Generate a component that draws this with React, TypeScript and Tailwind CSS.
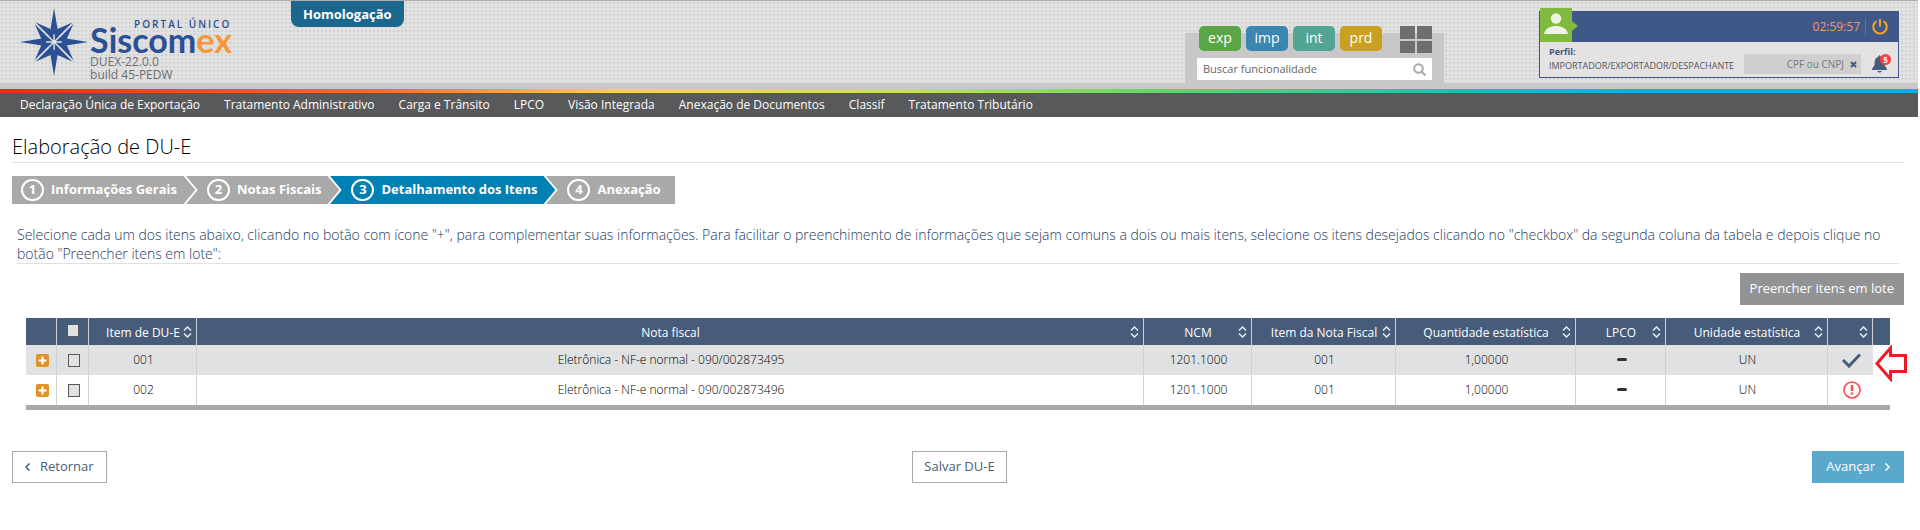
import { useState } from 'react'
import type { ReactNode } from 'react'

const menuItems = [
  'Declaração Única de Exportação',
  'Tratamento Administrativo',
  'Carga e Trânsito',
  'LPCO',
  'Visão Integrada',
  'Anexação de Documentos',
  'Classif',
  'Tratamento Tributário',
]

const modules = [
  { label: 'exp', color: 'bg-[#5aa546]' },
  { label: 'imp', color: 'bg-[#3b86b0]' },
  { label: 'int', color: 'bg-[#51a593]' },
  { label: 'prd', color: 'bg-[#c9a020]' },
]

const steps = ['Informações Gerais', 'Notas Fiscais', 'Detalhamento dos Itens', 'Anexação']

const columns = [
  { label: 'Item de DU-E', width: 'w-[108px]' },
  { label: 'Nota fiscal', width: '' },
  { label: 'NCM', width: 'w-[108px]' },
  { label: 'Item da Nota Fiscal', width: 'w-[144px]' },
  { label: 'Quantidade estatística', width: 'w-[180px]' },
  { label: 'LPCO', width: 'w-[90px]' },
  { label: 'Unidade estatística', width: 'w-[162px]' },
  { label: '', width: 'w-[45px]' },
]

const rows = [
  { item: '001', nota: 'Eletrônica - NF-e normal - 090/002873495', ncm: '1201.1000', itemNota: '001', qtd: '1,00000', unidade: 'UN', ok: true },
  { item: '002', nota: 'Eletrônica - NF-e normal - 090/002873496', ncm: '1201.1000', itemNota: '001', qtd: '1,00000', unidade: 'UN', ok: false },
]

function StarLogo() {
  return (
    <svg className="h-[70px] w-[70px]" viewBox="0 0 70 70" fill="#2b5093">
      <path d="M14 14 32 22 35 19 38 22 56 14 48 32 51 35 48 38 56 56 38 48 35 51 32 48 14 56 22 38 19 35 22 32Z" />
      <path d="M14 14 32 32M56 14 38 32M14 56 32 38M56 56 38 38" stroke="#e2e1e2" strokeWidth="1.8" />
      <path d="M35 0 40 30 70 35 40 40 35 70 30 40 0 35 30 30Z" />
      <path d="M29 29 41 41M41 29 29 41M35 27V43M27 35H43" stroke="#e2e1e2" strokeWidth="1.5" />
    </svg>
  )
}

function Logo() {
  return (
    <a href="#inicio" className="flex w-[232px] pt-1.5 pl-5" aria-label="Portal Único Siscomex">
      <StarLogo />
      <span className="pt-[11px] pl-0.5 text-[#2b5093]">
        <span className="block pl-11 text-[10px] leading-[12px] font-semibold tracking-[2px] whitespace-nowrap">PORTAL ÚNICO</span>
        <span className="-mt-0.5 block font-['Lato',sans-serif] text-[34px] leading-[24px] font-bold">
          Siscom<span className="text-[#f79838]">ex</span>
        </span>
        <span className="mt-[3px] block text-xs leading-[13px] text-[#6d6e70]">
          DUEX-22.0.0
          <br />
          build 45-PEDW
        </span>
      </span>
    </a>
  )
}

function SearchPanel() {
  return (
    <div className="mt-8 h-[50px] w-[259px] bg-[#cac7c9] px-3">
      <div className="flex justify-between pl-0.5">
        <div className="-mt-[7px] flex gap-[5px]">
          {modules.map((item) => (
            <a
              className={`h-[25px] w-[42px] rounded-[5px] text-center text-sm leading-[23px] text-white ${item.color}`}
              href={`#${item.label}`}
              key={item.label}
            >
              {item.label}
            </a>
          ))}
        </div>
        <button type="button" aria-label="Aplicações" className="-mt-[7px] grid h-[27px] w-8 grid-cols-2 gap-0.5">
          <span className="bg-[#6d6e70]" />
          <span className="bg-[#6d6e70]" />
          <span className="bg-[#6d6e70]" />
          <span className="bg-[#6d6e70]" />
        </button>
      </div>
      <div className="mt-[5px] flex h-[22px] items-center bg-white pr-1.5">
        <input
          aria-label="Buscar funcionalidade"
          className="min-w-0 flex-1 pl-1.5 text-[11px] outline-none placeholder:text-[#666]"
          placeholder="Buscar funcionalidade"
          type="text"
        />
        <button type="button" aria-label="Buscar">
          <svg className="size-[13px]" viewBox="0 0 13 13" fill="none" stroke="#a9a9a9" strokeWidth="2">
            <circle cx="5.5" cy="5.5" r="4.3" />
            <path d="m8.5 8.5 4 4" />
          </svg>
        </button>
      </div>
    </div>
  )
}

function UserPanel() {
  return (
    <div className="relative mt-2.5 mr-[19px] h-[67px] w-[360px] border border-[#405887] bg-[#e5e2e4]">
      <div className="flex h-[30px] items-center justify-end bg-[#405887] pr-2.5">
        <span className="text-xs text-[#f79855]">02:59:57</span>
        <span className="ml-[5px] h-4 w-px bg-[#5b72a3]" />
        <button type="button" aria-label="Sair" className="ml-1.5">
          <svg className="size-4" viewBox="0 0 16 16" fill="none" stroke="#f5a01f" strokeWidth="2">
            <path d="M4.5 2.2A6.7 6.7 0 1 0 11.5 2.2M8 0v7.5" />
          </svg>
        </button>
      </div>
      <svg className="absolute -top-1 left-0 h-[34px] w-[38px]" viewBox="0 0 38 34">
        <path d="M0 0H32V13L38 18 32 23V34H0Z" fill="#80bb3f" />
        <circle cx="16" cy="10.5" r="5.2" fill="#eef3e4" />
        <path d="M4 26C5 20 11 18 16 18S27 20 28 26Z" fill="#eef3e4" />
      </svg>
      <div className="flex justify-between">
        <div className="pt-[3px] pl-[9px] text-[9px] leading-[14px]">
          <p className="font-bold text-[#405887]">Perfil:</p>
          <p className="text-[#555]">IMPORTADOR/EXPORTADOR/DESPACHANTE</p>
        </div>
        <div className="flex pt-3 pr-1.5">
          <label className="flex h-5 w-[117px] items-center bg-[#d0cfd0] pr-1">
            <input
              aria-label="CPF ou CNPJ"
              className="min-w-0 flex-1 text-right text-[10px] outline-none placeholder:text-[#777]"
              placeholder="CPF ou CNPJ"
              type="text"
            />
            <svg className="ml-1.5 size-[7px]" viewBox="0 0 7 7" stroke="#405887" strokeWidth="2">
              <path d="m1 1 5 5M6 1 1 6" />
            </svg>
          </label>
          <button type="button" aria-label="Notificações" className="relative ml-[11px] size-5">
            <svg className="h-[18px] w-[15px]" viewBox="0 0 15 18" fill="#465c7a">
              <path d="M7.5 0 9 2C12 3 12.5 6 12.5 10L15 14V15H0V14L2.5 10C2.5 6 3 3 6 2ZM5 16H10Q7.5 19 5 16Z" />
            </svg>
            <span className="absolute top-0 left-2 size-[11px] rounded-full bg-[#fb3c44] text-center text-[8px] leading-[11px] font-bold text-white">
              5
            </span>
          </button>
        </div>
      </div>
    </div>
  )
}

function Stepper() {
  return (
    <ol className="mt-[13px] flex h-7 w-max bg-[#a9a9a9] text-[13px] font-bold text-white">
      {steps.map((step, index) => {
        const active = index === 2
        const beforeActive = index === 1
        return (
          <li className={active ? 'flex bg-[#0080b3]' : 'flex'} key={step}>
            <a href={`#etapa-${index + 1}`} className="flex items-center gap-[7px] pl-[9px]">
              <span className="flex h-[22px] w-[23px] items-center justify-center rounded-full border-2 border-white">{index + 1}</span>
              <span className={index === 3 ? 'pr-[14px]' : 'pr-[7px]'}>{step}</span>
            </a>
            {index < 3 ? (
              <svg className="h-7 w-[14px]" viewBox="0 0 14 28">
                <path d="M0 0H14V28H0Z" fill={beforeActive ? '#0080b3' : '#a9a9a9'} />
                <path d="M0 -1 12.5 14 0 29" fill={active ? '#0080b3' : '#a9a9a9'} stroke="#fff" strokeWidth="1.8" />
              </svg>
            ) : null}
          </li>
        )
      })}
    </ol>
  )
}

function SortIcon() {
  return (
    <svg className="h-3 w-[9px] shrink-0" viewBox="0 0 9 12" fill="none" stroke="#e6eaf0" strokeWidth="1.5">
      <path d="m1 4.5 3.5-3.5L8 4.5M1 7.5 4.5 11 8 7.5" />
    </svg>
  )
}

function Cell({ children, last }: { children: ReactNode; last?: boolean }) {
  return <td className={last ? 'pl-0.5 text-center' : 'border-r border-[#cfd0d1] pl-0.5 text-center'}>{children}</td>
}

function Checkbox({ label, checked, onChange }: { label: string; checked: boolean; onChange: () => void }) {
  return (
    <input
      aria-label={label}
      checked={checked}
      className="mx-auto block h-[13px] w-3 appearance-none border border-[#58595b] bg-[#e0e1e3] checked:bg-[#0080b3]"
      onChange={onChange}
      type="checkbox"
    />
  )
}

function ItemsTable() {
  const [selected, setSelected] = useState<string[]>([])
  const toggle = (item: string) =>
    setSelected(selected.includes(item) ? selected.filter((other) => other !== item) : [...selected, item])

  return (
    <div className="relative mx-[14px] mt-[13px]">
      <table className="w-full table-fixed border-separate border-spacing-0 border-b-[5px] border-[#a9a9a9] text-xs font-light text-black">
        <thead>
          <tr className="h-[27px] bg-[#465c7a] text-white">
            <th className="w-[31px] border-r border-[#cfd0d1]" aria-label="Editar" />
            <th className="w-8 border-r border-[#cfd0d1] pb-0.5">
              <Checkbox
                label="Selecionar todos"
                checked={selected.length === rows.length}
                onChange={() => setSelected(selected.length === rows.length ? [] : rows.map((row) => row.item))}
              />
            </th>
            {columns.map((column) => (
              <th className={`border-r border-[#cfd0d1] font-normal ${column.width}`} key={column.label}>
                <button type="button" className="flex w-full items-center pr-1" aria-label={column.label || 'Situação'}>
                  <span className="flex-1 pt-0.5 pl-[14px] whitespace-nowrap">{column.label}</span>
                  <SortIcon />
                </button>
              </th>
            ))}
            <th className="w-[17px]" aria-label="Rolagem" />
          </tr>
        </thead>
        <tbody>
          {rows.map((row) => (
            <tr className={row.ok ? 'h-[30px] bg-[#e0e1e3]' : 'h-[30px]'} key={row.item}>
              <Cell>
                <button type="button" aria-label={`Detalhar item ${row.item}`} className="mx-auto block">
                  <svg className="size-[13px]" viewBox="0 0 13 13">
                    <rect width="13" height="13" rx="2" fill="#dd9326" />
                    <path d="M6.5 2.5V10.5M2.5 6.5H10.5" stroke="#fff" strokeWidth="2" />
                  </svg>
                </button>
              </Cell>
              <Cell>
                <Checkbox label={`Selecionar item ${row.item}`} checked={selected.includes(row.item)} onChange={() => toggle(row.item)} />
              </Cell>
              <Cell>{row.item}</Cell>
              <Cell>{row.nota}</Cell>
              <Cell>{row.ncm}</Cell>
              <Cell>{row.itemNota}</Cell>
              <Cell>{row.qtd}</Cell>
              <Cell>
                <span className="mx-auto mb-0.5 block h-[3px] w-2.5 rounded-xs bg-[#333]" />
              </Cell>
              <Cell>{row.unidade}</Cell>
              <Cell last>
                {row.ok ? (
                  <svg className="mx-auto h-[15px] w-[19px]" viewBox="0 0 19 15" fill="none" stroke="#465c7a" strokeWidth="3">
                    <path d="m1 7 6 6L18 1.5" />
                  </svg>
                ) : (
                  <svg className="mx-auto size-[18px]" viewBox="0 0 18 18" fill="none" stroke="#fb4b4f" strokeWidth="1.6">
                    <circle cx="9" cy="9" r="8" />
                    <path d="M9 4v6M9 11.5v2" strokeWidth="2.5" />
                  </svg>
                )}
              </Cell>
              <td className="bg-white" />
            </tr>
          ))}
        </tbody>
      </table>
      <svg className="absolute top-[27px] -right-[17px] h-[37px] w-8" viewBox="0 0 32 37" fill="#fff" stroke="#ed1c24" strokeWidth="3">
        <path d="M2 18.5 15.5 3V10.5H30.5V26.5H15.5V34Z" />
      </svg>
    </div>
  )
}

export default function App() {
  return (
    <div className="bg-white font-['Open_Sans',sans-serif]">
      <header className="mr-0.5">
        <div className="flex h-[89px] justify-between border-t border-[#b0adaf] bg-[#e2e1e2] bg-[radial-gradient(circle,#d3d2d3_1px,transparent_1px)] bg-[size:4px_4px] shadow-[inset_0_-6px_0_#c9c7c8]">
          <div className="flex">
            <Logo />
            <span className="ml-[59px] h-[26px] rounded-b-lg bg-[#1b678e] px-3 text-[13px] leading-[26px] font-bold text-white">
              Homologação
            </span>
          </div>
          <div className="flex gap-[95px]">
            <SearchPanel />
            <UserPanel />
          </div>
        </div>
        <div className="h-1 bg-[linear-gradient(90deg,#f5280f,#ff6a2a_20%,#ffd04a_32%,#c8e252_47%,#5ed568_61%,#12c4b5_76%,#00b4ea_85%)]" />
        <nav className="flex h-6 items-center gap-6 bg-[#58595b] pl-5 text-xs text-white">
          {menuItems.map((item) => (
            <a href="#menu" key={item}>
              {item}
            </a>
          ))}
        </nav>
      </header>

      <main className="pt-[15px] pr-4 pl-3">
        <h1 className="border-b border-[#e0e0e0] text-xl leading-[30px] font-light text-black">Elaboração de DU-E</h1>
        <Stepper />
        <p className="mx-[5px] mt-[21px] border-b border-[#e0e0e0] text-sm leading-[19px] font-light text-[#1c3a63]">
          Selecione cada um dos itens abaixo, clicando no botão com ícone "+", para complementar suas informações. Para facilitar o
          preenchimento de informações que sejam comuns a dois ou mais itens, selecione os itens desejados clicando no "checkbox" da
          segunda coluna da tabela e depois clique no botão "Preencher itens em lote":
        </p>
        <div className="mt-[9px] flex justify-end">
          <button type="button" className="h-8 bg-[#929395] px-2.5 text-[13px] text-white">
            Preencher itens em lote
          </button>
        </div>
        <ItemsTable />
        <div className="mt-[41px] flex justify-between text-[13px] text-[#465c7a]">
          <button type="button" className="flex h-8 items-center gap-2.5 border border-[#a9a9a9] px-3">
            <svg className="h-2 w-[5px]" viewBox="0 0 5 8" fill="none" stroke="#465c7a" strokeWidth="1.5">
              <path d="M4.5 .5 1 4 4.5 7.5" />
            </svg>
            Retornar
          </button>
          <button type="button" className="h-8 border border-[#a9a9a9] px-[11px]">
            Salvar DU-E
          </button>
          <button type="button" className="flex h-8 items-center gap-2.5 bg-[#5ba8cd] px-[14px] text-white">
            Avançar
            <svg className="h-2 w-[5px]" viewBox="0 0 5 8" fill="none" stroke="#fff" strokeWidth="1.5">
              <path d="M.5 .5 4 4 .5 7.5" />
            </svg>
          </button>
        </div>
      </main>
    </div>
  )
}
